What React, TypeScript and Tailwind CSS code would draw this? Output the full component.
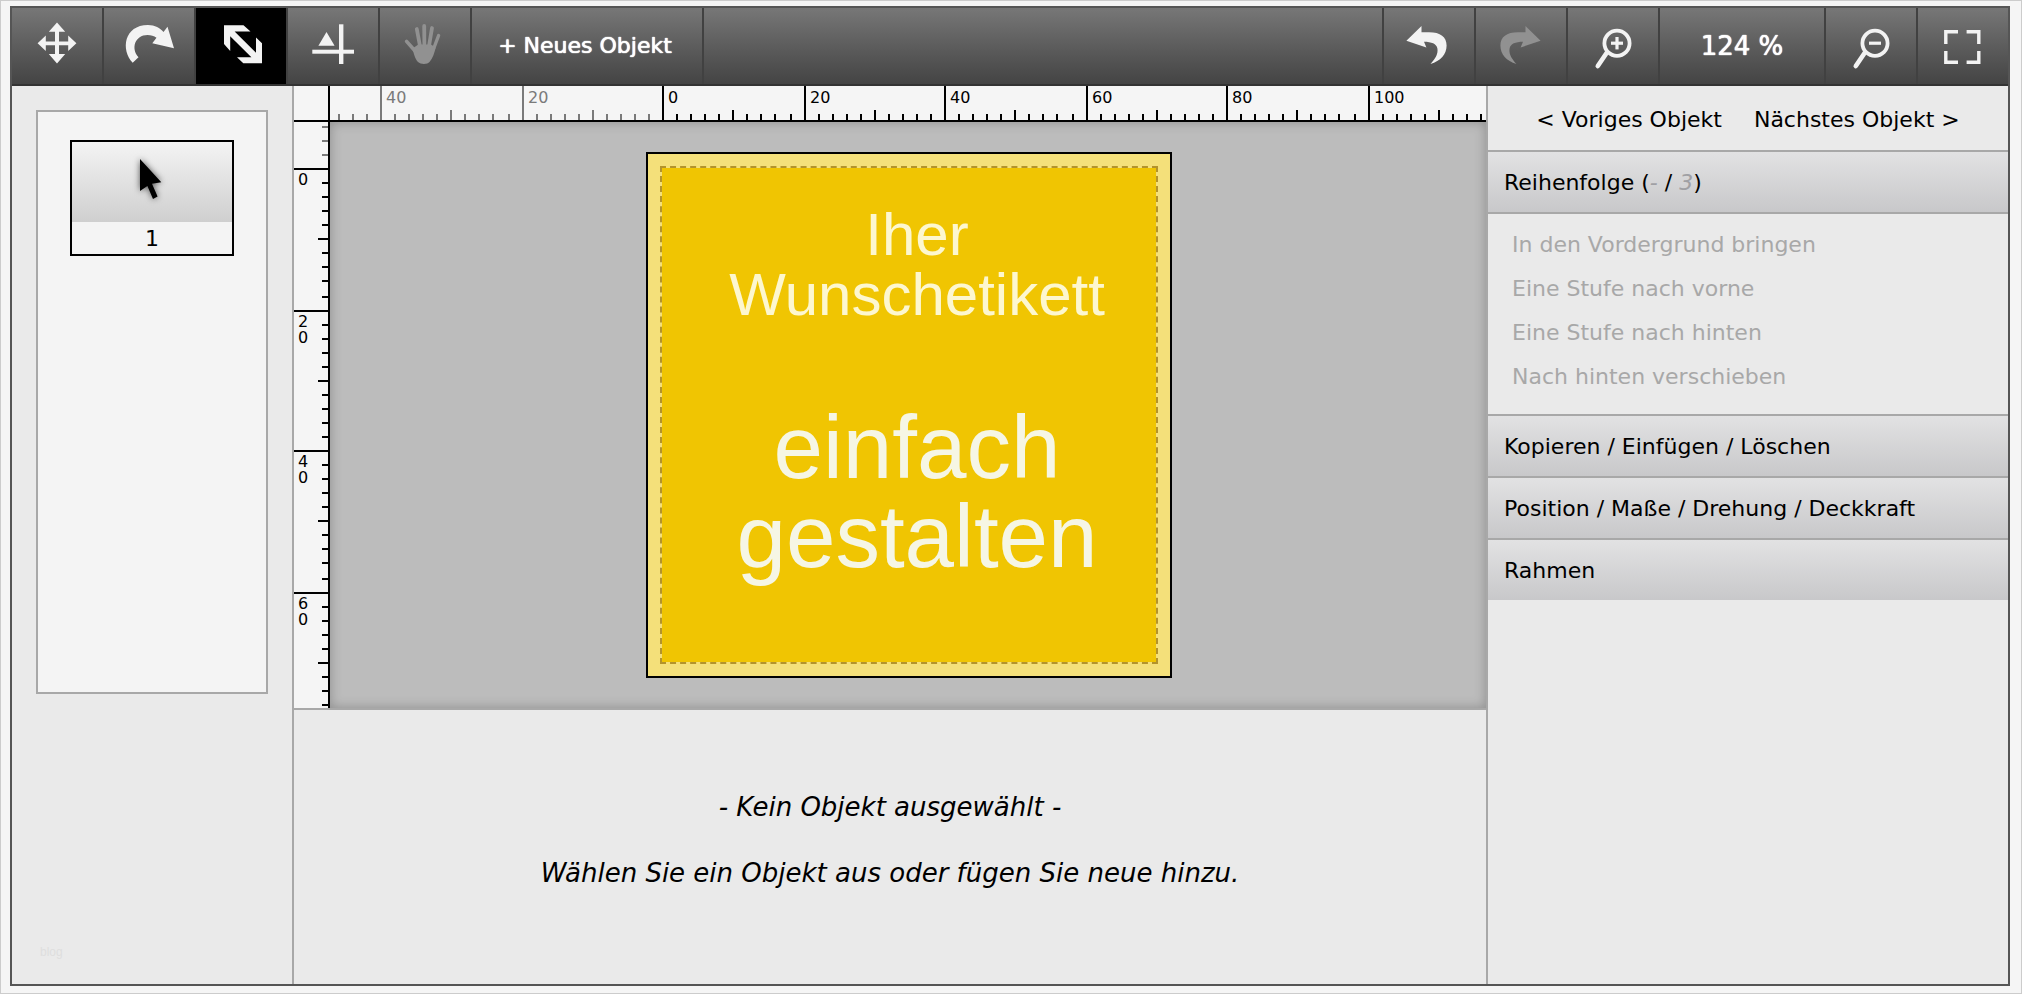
import { useEffect, useRef, useState } from "react";
import type { ReactNode } from "react";

const PIXELS_PER_UNIT = 3.525;
const ORIGIN_SHIFT = 0.07;

/** Ruler position in pixels, snapped to the two-pixel grid. */
function snap(unit: number): number {
  return 2 * Math.round(unit * PIXELS_PER_UNIT + ORIGIN_SHIFT);
}

/** Even units from the first one on, as far as they fit into the given length. */
function unitsWithin(from: number, origin: number, length: number): number[] {
  const units: number[] = [];
  for (let unit = from; origin + snap(unit) < length; unit += 2) units.push(unit);
  return units;
}

function tickLength(unit: number): number {
  if (unit % 20 === 0) return 34;
  return unit % 10 === 0 ? 10 : 6;
}

function tickColor(unit: number): string {
  return unit < 0 ? "#7a7a7a" : "#000000";
}

function HorizontalRuler() {
  const holder = useRef<HTMLDivElement>(null);
  const [width, setWidth] = useState(0);

  useEffect(() => {
    const element = holder.current;
    if (!element) return;
    const measure = () => setWidth(element.clientWidth);
    measure();
    const observer = new ResizeObserver(measure);
    observer.observe(element);
    return () => observer.disconnect();
  }, []);

  return (
    <div ref={holder} className="min-w-0 grow overflow-hidden">
      <svg className="block h-[34px] w-full" shapeRendering="crispEdges" aria-label="Horizontales Lineal">
        {unitsWithin(-46, 332, width).map((unit) => {
          const x = 332 + snap(unit);
          const length = tickLength(unit);
          return (
            <g key={unit} fill={tickColor(unit)}>
              <rect x={x} y={34 - length} width={2} height={length} />
              {unit % 20 === 0 && (
                <text x={x + 6} y={17} fontSize={16}>
                  {Math.abs(unit)}
                </text>
              )}
            </g>
          );
        })}
      </svg>
    </div>
  );
}

function VerticalRuler() {
  return (
    <svg className="block h-full w-[34px]" shapeRendering="crispEdges" aria-label="Vertikales Lineal">
      {unitsWithin(-6, 46, 586).map((unit) => {
        const y = 46 + snap(unit);
        const length = tickLength(unit);
        return (
          <g key={unit} fill={tickColor(unit)}>
            <rect x={34 - length} y={y} width={length} height={2} />
            {unit % 20 === 0 &&
              String(Math.abs(unit))
                .split("")
                .map((digit, index) => (
                  <text key={index} x={4} y={y + 17 + index * 16} fontSize={16}>
                    {digit}
                  </text>
                ))}
          </g>
        );
      })}
    </svg>
  );
}

function Icon({ children }: { children: ReactNode }) {
  return (
    <svg viewBox="0 0 90 76" className="block h-[76px] w-[90px]" fill="currentColor" aria-hidden="true">
      {children}
    </svg>
  );
}

function MoveIcon() {
  return (
    <Icon>
      <path d="M45 14.5L53.2 23.8H47V33.4H56.2V27.5L64.4 35.2L56.2 43V37.2H47V46H53.2L45 55.4L36.8 46H43V37.2H33.8V43L25.6 35.2L33.8 27.5V33.4H43V23.8H36.8Z" />
    </Icon>
  );
}

function RotateIcon() {
  return (
    <Icon>
      <path d="M28.7 54.7C16.5 42 20 17 44 17C51 17 56 20 59.5 24L63.5 18.7L70 40.3L48.3 35.3L52.5 29.7C50 28 47 27 43.5 27C31 27 26.5 40.5 34.5 49.3Z" />
    </Icon>
  );
}

function ResizeIcon() {
  return (
    <Icon>
      <path d="M28 17.3H47.5L54.5 23.6H38.6L60 44.8V29.5L66 35.3V55.3H47.3L41 49.3H55.4L34.2 28.2V43L28 36Z" />
    </Icon>
  );
}

function AlignIcon() {
  return (
    <Icon>
      <path d="M38.5 24L46.6 37.8H30.4Z" />
      <rect x="24.3" y="41.7" width="41.7" height="4" />
      <rect x="51" y="16.3" width="4.4" height="39.7" />
    </Icon>
  );
}

function HandIcon() {
  return (
    <Icon>
      <g fill="none" stroke="currentColor" strokeLinecap="round">
        <path d="M26.6 33.4L36 44" strokeWidth="3.6" />
        <path d="M36.8 21L40 38" strokeWidth="3.8" />
        <path d="M44.2 18L44.4 38" strokeWidth="3.8" />
        <path d="M52 20L49 38" strokeWidth="3.8" />
        <path d="M58.6 27.5L53.5 41" strokeWidth="3.4" />
      </g>
      <path d="M32.5 40.5L38.3 36.5H51L55.6 39.5C54.6 45 52.6 50.5 49.5 54C47.6 56.4 40.8 56.6 38 54C35 51 33.8 45.5 32.5 40.5Z" />
    </Icon>
  );
}

const TURN_PATH =
  "M22.4 32.7L37.5 18V24.3H45C56.5 24.3 62.6 29 62.6 37.5C62.6 46.5 56.5 53 46.5 56C52 50 54.2 45.5 53.4 40.5C52.6 35.8 47.5 33.8 40 33.8L42.4 39.5Z";

function UndoIcon() {
  return (
    <Icon>
      <path d={TURN_PATH} />
    </Icon>
  );
}

function RedoIcon() {
  return (
    <Icon>
      <path transform="translate(87 0) scale(-1 1)" d={TURN_PATH} />
    </Icon>
  );
}

function LensIcon({ plus }: { plus: boolean }) {
  return (
    <Icon>
      <g fill="none" stroke="currentColor">
        <circle cx="49" cy="35.2" r="12.6" strokeWidth="3.8" />
        <path d="M38.6 45L29.8 58" strokeWidth="4.6" strokeLinecap="round" />
        <path d="M43 35.2H55" strokeWidth="3.2" />
        {plus && <path d="M49 29V41.4" strokeWidth="3.2" />}
      </g>
    </Icon>
  );
}

function FullscreenIcon() {
  return (
    <Icon>
      <path
        d="M40 23.8H27.8V36M48.6 23.8H60.8V36M60.8 43V54.2H48.6M40 54.2H27.8V43"
        fill="none"
        stroke="currentColor"
        strokeWidth="3.4"
      />
    </Icon>
  );
}

function ToolButton({
  label,
  side,
  active = false,
  disabled = false,
  onClick,
  children,
}: {
  label: string;
  side: "left" | "right";
  active?: boolean;
  disabled?: boolean;
  onClick?: () => void;
  children: ReactNode;
}) {
  return (
    <button
      type="button"
      aria-label={label}
      title={label}
      disabled={disabled}
      onClick={onClick}
      className={[
        "shrink-0 border-[#414141]",
        side === "left" ? "border-r-2" : "border-l-2",
        active ? "bg-black" : "",
        disabled ? "text-[#919191]" : "text-[#f3f3f3]",
      ].join(" ")}
    >
      {children}
    </button>
  );
}

function SectionButton({ children, last = false }: { children: ReactNode; last?: boolean }) {
  return (
    <button
      type="button"
      className={`block w-full bg-linear-to-b from-[#e2e2e3] to-[#c8c8ca] px-4 pt-0.5 text-left leading-[58px] ${
        last ? "" : "border-b-2 border-[#a8a8a8]"
      }`}
    >
      {children}
    </button>
  );
}

const ORDER_ACTIONS = [
  "In den Vordergrund bringen",
  "Eine Stufe nach vorne",
  "Eine Stufe nach hinten",
  "Nach hinten verschieben",
];

export default function App() {
  const [tool, setTool] = useState("resize");

  return (
    <div className="flex min-h-screen flex-col border border-[#cccccc] bg-[#f5f5f5] pt-[5px] pr-[11px] pb-[7px] pl-[9px] font-['DejaVu_Sans',Verdana,sans-serif] text-[22px] text-black">
      <div className="flex grow flex-col border-2 border-[#555555] bg-[#eaeaea]">
        <header className="flex h-[78px] justify-between border-b-2 border-[#333333] bg-linear-to-b from-[#777777] to-[#444444]">
          <div className="flex">
            <ToolButton side="left" label="Verschieben" active={tool === "move"} onClick={() => setTool("move")}>
              <MoveIcon />
            </ToolButton>
            <ToolButton side="left" label="Drehen" active={tool === "rotate"} onClick={() => setTool("rotate")}>
              <RotateIcon />
            </ToolButton>
            <ToolButton side="left" label="Skalieren" active={tool === "resize"} onClick={() => setTool("resize")}>
              <ResizeIcon />
            </ToolButton>
            <ToolButton side="left" label="Ausrichten" active={tool === "align"} onClick={() => setTool("align")}>
              <AlignIcon />
            </ToolButton>
            <ToolButton side="left" label="Ansicht verschieben" disabled>
              <HandIcon />
            </ToolButton>
            <button
              type="button"
              className="w-[232px] border-r-2 border-[#414141] pr-1 pb-0.5 text-center whitespace-nowrap text-white text-shadow-[0_0_1px_#ffffff,0_0_1px_#ffffff]"
            >
              + Neues Objekt
            </button>
          </div>
          <div className="flex">
            <ToolButton side="right" label="Rückgängig">
              <UndoIcon />
            </ToolButton>
            <ToolButton side="right" label="Wiederholen" disabled>
              <RedoIcon />
            </ToolButton>
            <ToolButton side="right" label="Vergrößern">
              <LensIcon plus />
            </ToolButton>
            <div className="flex w-[166px] items-center justify-center border-l-2 border-[#414141] text-[26px] text-white text-shadow-[0_0_1px_#ffffff,0_0_1px_#ffffff]">
              124 %
            </div>
            <ToolButton side="right" label="Verkleinern">
              <LensIcon plus={false} />
            </ToolButton>
            <ToolButton side="right" label="Vollbild">
              <FullscreenIcon />
            </ToolButton>
          </div>
        </header>

        <div className="flex grow">
          <aside className="flex w-[282px] shrink-0 flex-col justify-between border-r-2 border-[#a8a8a8] px-6 pt-6 pb-6">
            <div className="flex h-[584px] flex-col items-center border-2 border-[#a8a8a8] bg-[#f4f4f4] pt-7">
              <button type="button" className="w-[164px] border-2 border-black">
                <svg
                  viewBox="0 0 160 80"
                  className="block h-20 w-full bg-linear-to-b from-[#f4f4f4] to-[#cfcfcf]"
                  aria-hidden="true"
                >
                  <path
                    className="drop-shadow-[0_0_3px_rgba(0,0,0,0.65)]"
                    d="M68 17L89.3 40.3L80 41.8L85.6 54.5L81 57L75.4 44L68 49Z"
                  />
                </svg>
                <span className="block pt-0.5 leading-[30px]">1</span>
              </button>
            </div>
            <p className="px-1 font-['Liberation_Sans',sans-serif] text-xs leading-4 text-[#dedede]">blog</p>
          </aside>

          <main className="flex min-w-0 grow flex-col">
            <section className="flex h-[624px] flex-col border-b-2 border-[#a8a8a8]">
              <div className="flex border-b-2 border-black bg-[#f5f5f5]">
                <div className="w-9 shrink-0 border-r-2 border-black" />
                <HorizontalRuler />
              </div>
              <div className="flex grow">
                <div className="w-9 shrink-0 border-r-2 border-black bg-[#f5f5f5]">
                  <VerticalRuler />
                </div>
                <div className="relative grow overflow-hidden bg-[#bcbcbc] shadow-[inset_0_0_12px_rgba(0,0,0,0.25)]">
                  <div className="absolute top-[30px] left-[316px] size-[526px] border-2 border-black bg-[#f4e07a] p-3">
                    <div className="size-full border-2 border-dashed border-[#b3932c] bg-[#f0c502] bg-clip-padding pt-[37px] pl-4 text-center font-['Liberation_Sans',Arial,sans-serif]">
                      <p className="text-[60px] leading-[60px] text-[#fdf7cf]">
                        Iher
                        <br />
                        Wunschetikett
                      </p>
                      <p className="mt-[78px] text-[89px] leading-[89px] text-[#f6f6e4]">
                        einfach
                        <br />
                        gestalten
                      </p>
                    </div>
                  </div>
                </div>
              </div>
            </section>
            <section className="flex grow flex-col items-center pt-16 text-[26px] leading-[66px] italic">
              <p>- Kein Objekt ausgewählt -</p>
              <p>Wählen Sie ein Objekt aus oder fügen Sie neue hinzu.</p>
            </section>
          </main>

          <aside className="w-[522px] shrink-0 border-l-2 border-[#a8a8a8]">
            <nav className="flex h-[66px] items-center justify-center gap-8 border-b-2 border-[#a8a8a8] pt-0.5 whitespace-nowrap">
              <button type="button">&lt; Voriges Objekt</button>
              <button type="button">Nächstes Objekt &gt;</button>
            </nav>
            <SectionButton>
              Reihenfolge (<i className="text-[#a0a0a4]">-</i> / <i className="text-[#a0a0a4]">3</i>)
            </SectionButton>
            <ul className="h-[202px] border-b-2 border-[#a8a8a8] px-6 pt-[9px] leading-[44px] text-[#a8a8a8]">
              {ORDER_ACTIONS.map((action) => (
                <li key={action}>
                  <button type="button" disabled>
                    {action}
                  </button>
                </li>
              ))}
            </ul>
            <SectionButton>Kopieren / Einfügen / Löschen</SectionButton>
            <SectionButton>Position / Maße / Drehung / Deckkraft</SectionButton>
            <SectionButton last>Rahmen</SectionButton>
          </aside>
        </div>
      </div>
    </div>
  );
}
